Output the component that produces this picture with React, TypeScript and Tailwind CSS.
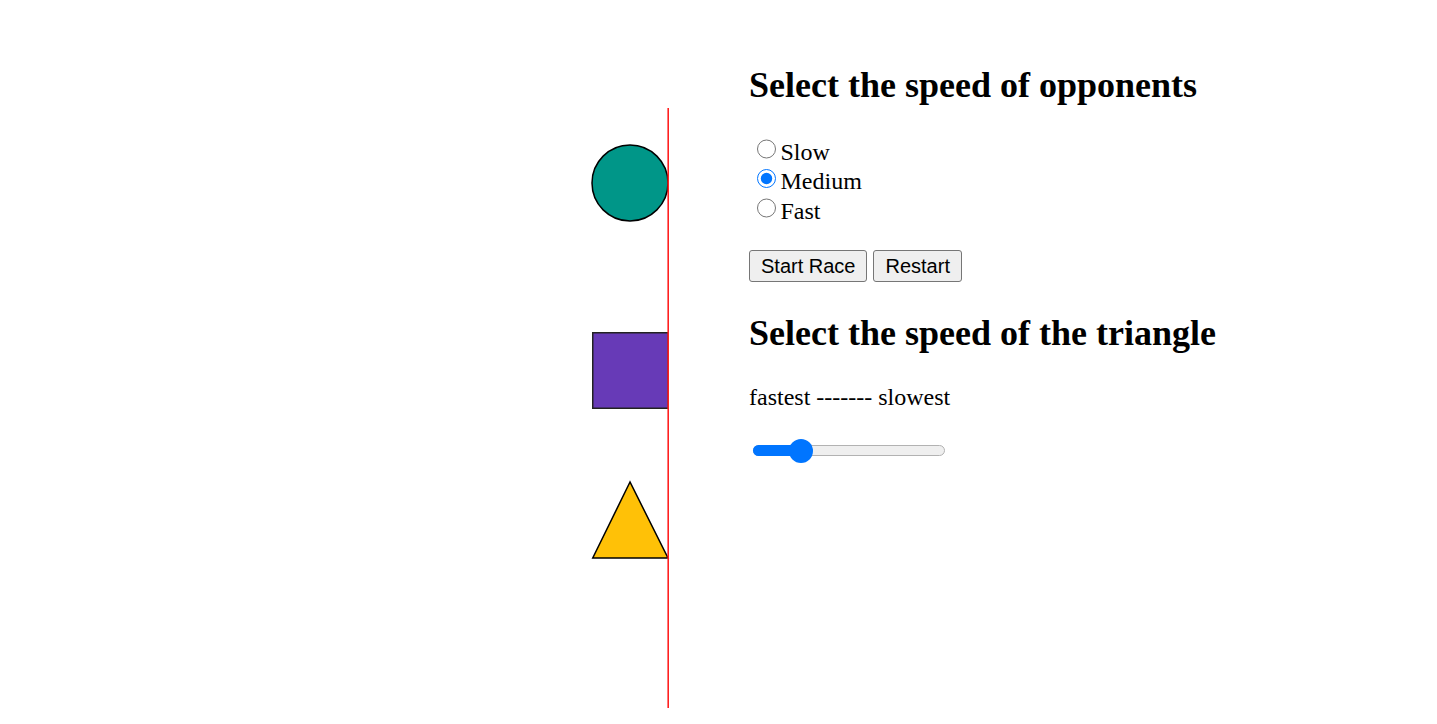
import { useState } from "react";

const speeds = ["Slow", "Medium", "Fast"];

function RaceTrack() {
  return (
    <svg width="82" height="600" viewBox="0 0 82 600" className="mt-[108px] shrink-0">
      <circle cx="40" cy="75" r="38" fill="#009688" stroke="#000" strokeWidth="1.5" />
      <rect x="2.75" y="224.75" width="75.5" height="75.5" fill="#673ab7" stroke="#222" strokeWidth="1.5" />
      <polygon points="40,374 2.75,450 78,450" fill="#ffc107" stroke="#000" strokeWidth="1.5" />
      <line x1="78.2" y1="0" x2="78.2" y2="600" stroke="#ff2020" strokeWidth="1.6" />
    </svg>
  );
}

function SpeedSlider({ pos }: { pos: number }) {
  // pos = thumb centre in px from the track's left end
  return (
    <div className="relative mt-[27.6px] ml-[3.5px] h-[24px] w-[192px]">
      <div className="absolute left-0 right-0 top-[6.5px] h-[11px] rounded-full border border-[#b2b2b2] bg-[#efefef]" />
      <div
        className="absolute left-0 top-[6.5px] h-[11px] rounded-l-full bg-[#0075ff]"
        style={{ width: `${pos}px` }}
      />
      <div
        className="absolute top-0 h-[24px] w-[24px] -translate-x-1/2 rounded-full bg-[#0075ff]"
        style={{ left: `${pos}px` }}
      />
    </div>
  );
}

export default function App() {
  const [speed, setSpeed] = useState("Medium");

  return (
    <div className="flex min-h-[724px] items-start bg-white pl-[590px] font-['Liberation_Serif',serif] text-black">
      <RaceTrack />

      <div className="ml-[77px] flex flex-col items-start pt-[64.7px]">
        <h2 className="text-[36px] font-bold leading-[41px]">Select the speed of opponents</h2>

        <div className="mt-[32.2px] flex flex-col">
          {speeds.map((s) => (
            <label key={s} className="flex h-[29.5px] items-start text-[24px] leading-[29.5px]">
              <input
                type="radio"
                name="speed"
                checked={speed === s}
                onChange={() => setSpeed(s)}
                className="m-0 ml-[7.5px] mr-[4.5px] mt-[1.3px] h-[19.5px] w-[19.5px] accent-[#0075ff]"
              />
              {s}
            </label>
          ))}
        </div>

        <div className="mt-[23.8px] flex gap-[6px] font-['Liberation_Sans',Arial,sans-serif] text-[20px] leading-[23px]">
          <button className="rounded-[3px] border border-[#767676] bg-[#efefef] px-[11px] py-[3.5px]">
            Start Race
          </button>
          <button className="rounded-[3px] border border-[#767676] bg-[#efefef] px-[11px] py-[3.5px]">
            Restart
          </button>
        </div>

        <h2 className="mt-[31.2px] text-[36px] font-bold leading-[41px]">Select the speed of the triangle</h2>

        <p className="mt-[28.7px] text-[24px] leading-[28px]">fastest ------- slowest</p>

        <SpeedSlider pos={48.5} />
      </div>
    </div>
  );
}
